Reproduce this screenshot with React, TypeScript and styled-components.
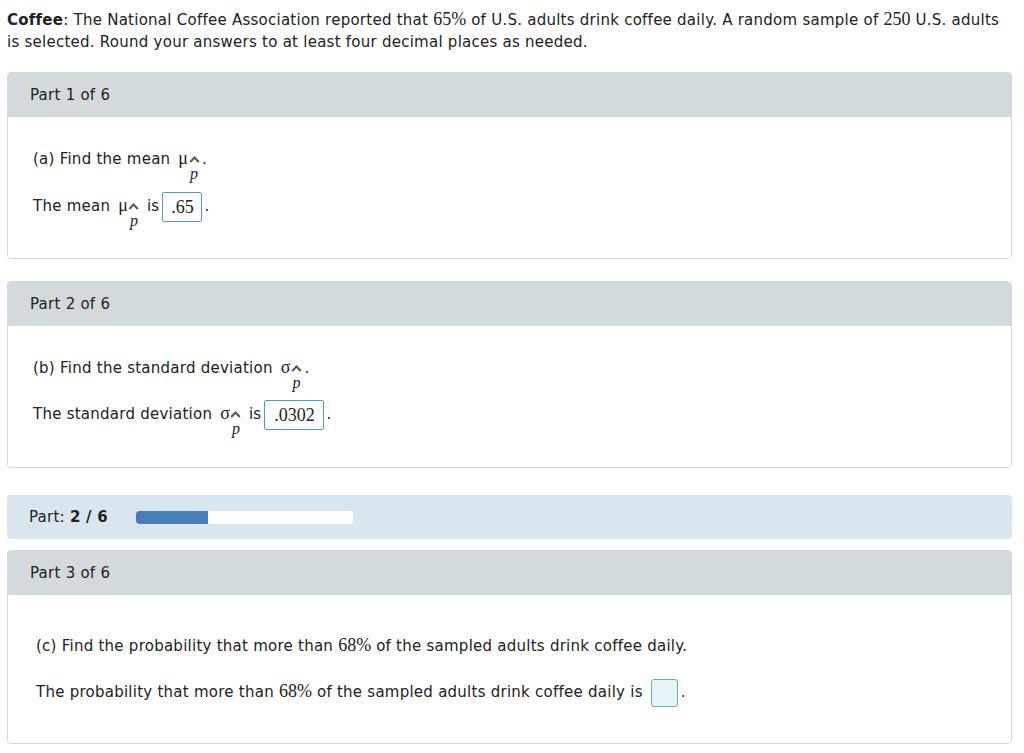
import styled, { createGlobalStyle } from "styled-components";

const GlobalStyle = createGlobalStyle`
  body {
    margin: 0;
    background: #ffffff;
    font-family: "DejaVu Sans", Verdana, sans-serif;
    font-size: 15px;
    letter-spacing: 0.25px;
    color: #222222;
  }
`;

const Page = styled.main`
  padding: 9px 12px 20px 7px;
  display: flex;
  flex-direction: column;
`;

const Intro = styled.p`
  margin: 0 0 19px;
  line-height: 22px;
  b {
    font-weight: bold;
  }
`;

const Num = styled.span`
  font-family: "Liberation Serif", "Times New Roman", serif;
  font-size: 18px;
  letter-spacing: 0;
  line-height: 1;
`;

const Panel = styled.section<{ $gap: number }>`
  margin-bottom: ${(p) => p.$gap}px;
  border-radius: 4px;
  overflow: hidden;
  border: 1px solid #cfd9dd;
`;

const PanelHeader = styled.header`
  height: 44px;
  background: #d3dadd;
  display: flex;
  align-items: center;
  padding-left: 22px;
`;

const PanelBody = styled.div<{
  $height: number;
  $indent: number;
  $top: number;
  $rowGap: number;
}>`
  height: ${(p) => p.$height}px;
  box-sizing: border-box;
  padding: ${(p) => p.$top}px 0 0 ${(p) => p.$indent}px;
  display: flex;
  flex-direction: column;
  gap: ${(p) => p.$rowGap}px;
  background: #ffffff;
`;

const Line = styled.div`
  height: 20px;
  line-height: 20px;
  white-space: nowrap;
`;

const Greek = styled.span`
  font-family: "Liberation Serif", "Times New Roman", serif;
  font-size: 18px;
  letter-spacing: 0;
  line-height: 1;
  margin-left: 3px;
`;

const Sub = styled.span`
  display: inline-block;
  vertical-align: -15px;
  width: 12px;
  margin-right: 2px;
  text-align: center;
`;

const Hat = styled.svg`
  display: block;
  margin: 0 auto 4px;
`;

const SubP = styled.i`
  display: block;
  font-family: "Liberation Serif", "Times New Roman", serif;
  font-size: 16px;
  letter-spacing: 0;
  line-height: 14px;
`;

const AnswerBox = styled.span<{ $width: number }>`
  display: inline-flex;
  align-items: center;
  justify-content: center;
  box-sizing: border-box;
  width: ${(p) => p.$width}px;
  height: 30px;
  margin: -6px 2px -6px 3px;
  vertical-align: middle;
  border: 1px solid #4fa0b3;
  border-radius: 2px;
  font-family: "Liberation Serif", "Times New Roman", serif;
  font-size: 18px;
  letter-spacing: 0;
`;

const EmptyBox = styled.span`
  display: inline-block;
  box-sizing: border-box;
  width: 27px;
  height: 28px;
  margin: -5px 3px -5px 8px;
  vertical-align: middle;
  background: #e6f4f8;
  border: 1px solid #66afc0;
  border-radius: 3px;
`;

const ProgressPanel = styled.div`
  height: 44px;
  margin-bottom: 11px;
  border-radius: 4px;
  background: #dae6ef;
  display: flex;
  align-items: center;
  padding-left: 22px;
  gap: 28px;
`;

const ProgressLabel = styled.span`
  b {
    font-weight: bold;
  }
`;

const Track = styled.div`
  width: 217px;
  height: 13px;
  background: #ffffff;
  border-radius: 3px;
  overflow: hidden;
`;

const Fill = styled.div`
  height: 100%;
  background: #4a7db8;
  border-radius: 3px 0 0 3px;
`;

const Hatted = ({ sym }: { sym: string }) => (
  <>
    <Greek>{sym}</Greek>
    <Sub>
      <Hat width="11" height="7" viewBox="0 0 11 7">
        <polyline
          points="1.2,6 5.5,1.5 9.8,6"
          fill="none"
          stroke="#555"
          strokeWidth="2"
        />
      </Hat>
      <SubP>p</SubP>
    </Sub>
  </>
);

const App = (): JSX.Element => {
  const part = 2;
  const total = 6;

  return (
    <>
      <GlobalStyle />
      <Page>
        <Intro>
          <b>Coffee</b>: The National Coffee Association reported that{" "}
          <Num>65%</Num> of U.S. adults drink coffee daily. A random sample of{" "}
          <Num>250</Num> U.S. adults is selected. Round your answers to at least
          four decimal places as needed.
        </Intro>

        <Panel $gap={22}>
          <PanelHeader>Part 1 of 6</PanelHeader>
          <PanelBody $height={141} $indent={25} $top={32} $rowGap={27}>
            <Line>
              (a) Find the mean <Hatted sym="μ" />.
            </Line>
            <Line>
              The mean <Hatted sym="μ" /> is
              <AnswerBox $width={40}>.65</AnswerBox>.
            </Line>
          </PanelBody>
        </Panel>

        <Panel $gap={27}>
          <PanelHeader>Part 2 of 6</PanelHeader>
          <PanelBody $height={141} $indent={25} $top={32} $rowGap={26}>
            <Line>
              (b) Find the standard deviation <Hatted sym="σ" />.
            </Line>
            <Line>
              The standard deviation <Hatted sym="σ" /> is
              <AnswerBox $width={60}>.0302</AnswerBox>.
            </Line>
          </PanelBody>
        </Panel>

        <ProgressPanel>
          <ProgressLabel>
            Part: <b>{part} / {total}</b>
          </ProgressLabel>
          <Track>
            <Fill style={{ width: `${(part / total) * 100}%` }} />
          </Track>
        </ProgressPanel>

        <Panel $gap={0}>
          <PanelHeader>Part 3 of 6</PanelHeader>
          <PanelBody $height={148} $indent={28} $top={41} $rowGap={26}>
            <Line>
              (c) Find the probability that more than <Num>68%</Num> of the
              sampled adults drink coffee daily.
            </Line>
            <Line>
              The probability that more than <Num>68%</Num> of the sampled
              adults drink coffee daily is
              <EmptyBox />.
            </Line>
          </PanelBody>
        </Panel>
      </Page>
    </>
  );
};

export default App;
